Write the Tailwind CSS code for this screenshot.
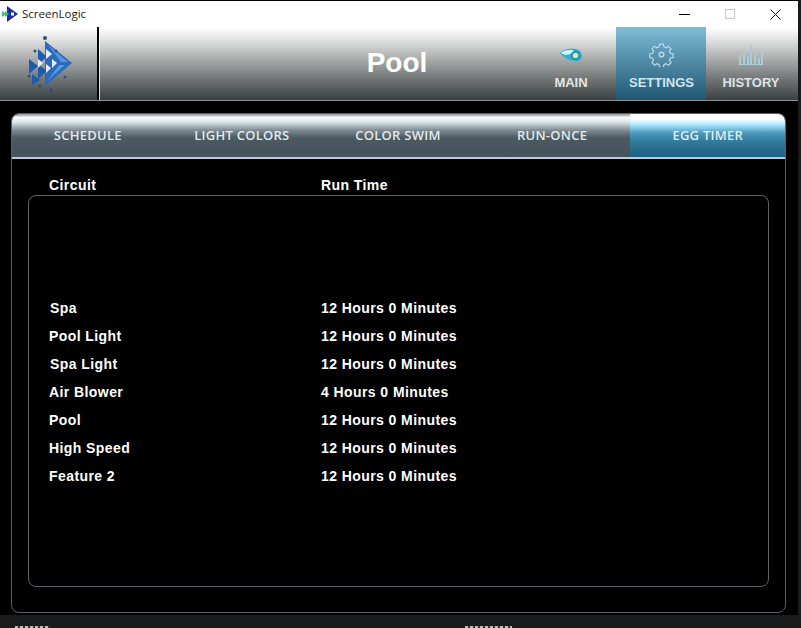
<!DOCTYPE html>
<html lang="en">
<head>
    <meta charset="UTF-8">
    <title>ScreenLogic</title>
    <script src="https://cdn.jsdelivr.net/npm/@tailwindcss/browser@4"></script>
</head>
<body class="bg-[#1a1a1a] overflow-hidden">
<div class="w-[801px] h-[628px] overflow-hidden flex flex-col font-['Liberation_Sans',sans-serif]">

    <div class="w-[798px] h-[615px] bg-black flex flex-col shrink-0">
        <!-- title bar -->
        <div class="h-[26px] mt-px bg-white flex items-center shrink-0">
            <svg class="ml-[2px] w-[16px] h-[18px]" viewBox="0 0 16 18">
                <path d="M5 1 L16 9 L5 17 Z" fill="#1b2f9c"/>
                <path d="M0 6 L4 9 L0 12 Z M3 6 L7 9 L3 12 Z" fill="#35c46a"/>
                <rect x="9" y="7.5" width="3" height="3" fill="#fff"/>
            </svg>
            <span class="ml-[4px] text-[11.5px] text-[#222] font-['Open_Sans',sans-serif]">ScreenLogic</span>
            <div class="ml-auto flex items-center">
                <div class="w-[11px] h-[1px] bg-black mr-[35px]"></div>
                <div class="w-[10px] h-[10px] border border-[#c8c8c8] mr-[35px]"></div>
                <svg class="w-[11px] h-[11px] mr-[17px]" viewBox="0 0 11 11"><path d="M0.5 0.5 L10.5 10.5 M10.5 0.5 L0.5 10.5" stroke="#111" stroke-width="1"/></svg>
            </div>
        </div>

        <!-- toolbar -->
        <div class="h-[74px] flex shrink-0 bg-[linear-gradient(to_bottom,#fff_0%,#f0f0f0_10%,#a8aaaa_45%,#6a6e6e_75%,#3a4141_100%)] border-b border-[#8d9090]">
            <div class="w-[97px] flex items-start shrink-0">
                <svg class="w-[48px] h-[58px] ml-[27px] mt-[9px]" viewBox="0 0 48 58">
                    <path d="M18 5 L45 27 L18 50 Z" fill="#2a6bc0"/>
                    <path d="M21 9 L41 26 L34 26 Z M21 44 L38 29 L32 29 Z" fill="#5b95db"/>
                    <path d="M11 13 L20 21 L11 28 Z M2 23 L11 30 L2 38 Z M11 28 L20 35 L11 43 Z M5 38 L13 44 L5 49 Z" fill="#1e5ab0"/>
                    <path d="M19 13 L25 18 L19 23 Z M11 23 L16 27 L11 32 Z M25 23 L30 27 L25 32 Z M19 28 L24 32 L19 37 Z" fill="#e8edf2"/>
                    <circle cx="18" cy="2" r="2" fill="#2c4f86"/><circle cx="8" cy="15" r="1.500" fill="#2c4f86"/><circle cx="29" cy="15" r="1.500" fill="#2c4f86"/><circle cx="2" cy="40" r="1.500" fill="#2c4f86"/><circle cx="38" cy="41" r="1.500" fill="#2c4f86"/><circle cx="13" cy="50" r="1.500" fill="#2c4f86"/><circle cx="24" cy="54" r="2" fill="#2c4f86"/>
                </svg>
            </div>
            <div class="w-[2px] bg-black shrink-0"></div>
            <div class="w-px bg-white/80 shrink-0"></div>
            <div class="flex-1 flex items-center justify-center pl-[168px] pb-[2px]">
                <h1 class="text-[28px] font-bold text-white leading-none">Pool</h1>
            </div>
            <nav class="flex shrink-0 mr-[2px] text-[13px] font-bold">
                <a class="w-[90px] flex flex-col items-center text-[#e4e6e6]">
                    <svg class="w-[24px] h-[16px] mt-[20px]" viewBox="0 0 24 16">
                        <path d="M1 6 C4 2 12 1 17 2 C21 3 23 6 23 9 C23 13 19 15 15 14 C9 13 4 10 1 6 Z" fill="#35aed4"/>
                        <path d="M2 6 C5 3 12 2 15 4 C12 8 6 9 2 6 Z" fill="#d4f5ff"/>
                        <circle cx="16.500" cy="8.500" r="4.500" fill="#1f8ea5"/>
                        <circle cx="16.500" cy="8.500" r="2.800" fill="#dfe8a0"/>
                    </svg>
                    <span class="mt-[13px] leading-none">MAIN</span>
                </a>
                <a class="w-[90px] flex flex-col items-center text-[#cfe6f0] bg-gradient-to-b from-[#7fbcd6] to-[#1e5873]">
                    <svg class="w-[25px] h-[25px] mt-[15px]" viewBox="0 0 24 24" fill="none" stroke="#b8dbe8" stroke-width="1.300">
                        <path d="M10 1.5h4l.6 3 2.2 1 2.6-1.7 2.8 2.8-1.700 2.600 1 2.200 3 .6v4l-3 .6-1 2.200 1.700 2.600-2.800 2.800-2.600-1.700-2.200 1-.6 3h-4l-.6-3-2.200-1-2.600 1.700-2.800-2.800 1.700-2.600-1-2.200-3-.6v-4l3-.6 1-2.200L1.800 6.600l2.800-2.800 2.600 1.700 2.200-1z" transform="translate(1.2 .6) scale(.9)"/>
                        <circle cx="12" cy="12" r="2.200"/>
                    </svg>
                    <span class="mt-[9px] ml-px leading-none">SETTINGS</span>
                </a>
                <a class="w-[90px] flex flex-col items-center text-[#dfe3e5]">
                    <svg class="w-[26px] h-[22px] mt-[17px]" viewBox="0 0 26 22" fill="#a9ccd9">
                        <rect x="1" y="11" width="2" height="10"/><rect x="5" y="9" width="2" height="12"/><rect x="9" y="13" width="2" height="8"/>
                        <rect x="12" y="1" width="2" height="20"/><rect x="16" y="10" width="2" height="11"/><rect x="20" y="14" width="2" height="7"/><rect x="23" y="5" width="2" height="16"/>
                        <rect x="1" y="20" width="24" height="1"/>
                    </svg>
                    <span class="mt-[10px] leading-none">HISTORY</span>
                </a>
            </nav>
        </div>

        <!-- panel -->
        <div class="ml-[11px] mr-[12px] mt-[12px] h-[500px] rounded-[8px] border border-[#5a6064] flex flex-col overflow-hidden">
            <div class="grid grid-cols-5 h-[43px] shrink-0 text-[13px] font-semibold font-['Open_Sans',sans-serif] tracking-[0.25px] text-[#e2e9ed]">
                <div class="flex items-center justify-center pr-[3px] bg-[linear-gradient(to_bottom,#8e9598_0%,#f6fafb_8%,#e0e8ea_18%,#7d8a92_38%,#4c5a62_55%,#44525a_100%)]">SCHEDULE</div>
                <div class="flex items-center justify-center pr-[4px] bg-[linear-gradient(to_bottom,#8e9598_0%,#f6fafb_8%,#e0e8ea_18%,#7d8a92_38%,#4c5a62_55%,#44525a_100%)]">LIGHT COLORS</div>
                <div class="flex items-center justify-center pr-px bg-[linear-gradient(to_bottom,#8e9598_0%,#f6fafb_8%,#e0e8ea_18%,#7d8a92_38%,#4c5a62_55%,#44525a_100%)]">COLOR SWIM</div>
                <div class="flex items-center justify-center pr-[2px] bg-[linear-gradient(to_bottom,#8e9598_0%,#f6fafb_8%,#e0e8ea_18%,#7d8a92_38%,#4c5a62_55%,#44525a_100%)]">RUN-ONCE</div>
                <div class="flex items-center justify-center bg-[linear-gradient(to_bottom,#fff_0%,#fff_12%,#a5e9ff_25%,#4b97ba_45%,#2f7a9c_65%,#1f5f80_100%)]">EGG TIMER</div>
            </div>
            <div class="h-[2px] bg-[#b5cfe0] shrink-0"></div>

            <div class="flex-1 flex flex-col px-[16px]">
                <div class="flex h-[37px] -mb-px shrink-0 items-end text-[14px] font-bold text-white tracking-[0.42px]">
                    <span class="w-[293px] pl-[21px]">Circuit</span>
                    <span>Run Time</span>
                </div>
                <div class="h-[392px] rounded-[8px] border border-[#5f6468] pt-[98px] text-[14px] font-bold text-white tracking-[0.42px]">
                    <div class="flex h-[28px] items-center"><span class="w-[292px] pl-[21px]">Spa</span><span>12 Hours 0 Minutes</span></div>
                    <div class="flex h-[28px] items-center"><span class="w-[292px] pl-[20px]">Pool Light</span><span>12 Hours 0 Minutes</span></div>
                    <div class="flex h-[28px] items-center"><span class="w-[292px] pl-[21px]">Spa Light</span><span>12 Hours 0 Minutes</span></div>
                    <div class="flex h-[28px] items-center"><span class="w-[292px] pl-[20px]">Air Blower</span><span>4 Hours 0 Minutes</span></div>
                    <div class="flex h-[28px] items-center"><span class="w-[292px] pl-[20px]">Pool</span><span>12 Hours 0 Minutes</span></div>
                    <div class="flex h-[28px] items-center"><span class="w-[292px] pl-[20px]">High Speed</span><span>12 Hours 0 Minutes</span></div>
                    <div class="flex h-[28px] items-center"><span class="w-[292px] pl-[20px]">Feature 2</span><span>12 Hours 0 Minutes</span></div>
                </div>
            </div>
        </div>
    </div>

    <!-- tops of the page behind the window -->
    <div class="flex mt-[11px] h-[2px]">
        <div class="ml-[15px] w-[35px] bg-[repeating-linear-gradient(to_right,#bbb_0_3px,#333_3px_5px)]"></div>
        <div class="ml-[415px] w-[47px] bg-[repeating-linear-gradient(to_right,#bbb_0_3px,#333_3px_5px)]"></div>
    </div>
</div>
</body>
</html>
